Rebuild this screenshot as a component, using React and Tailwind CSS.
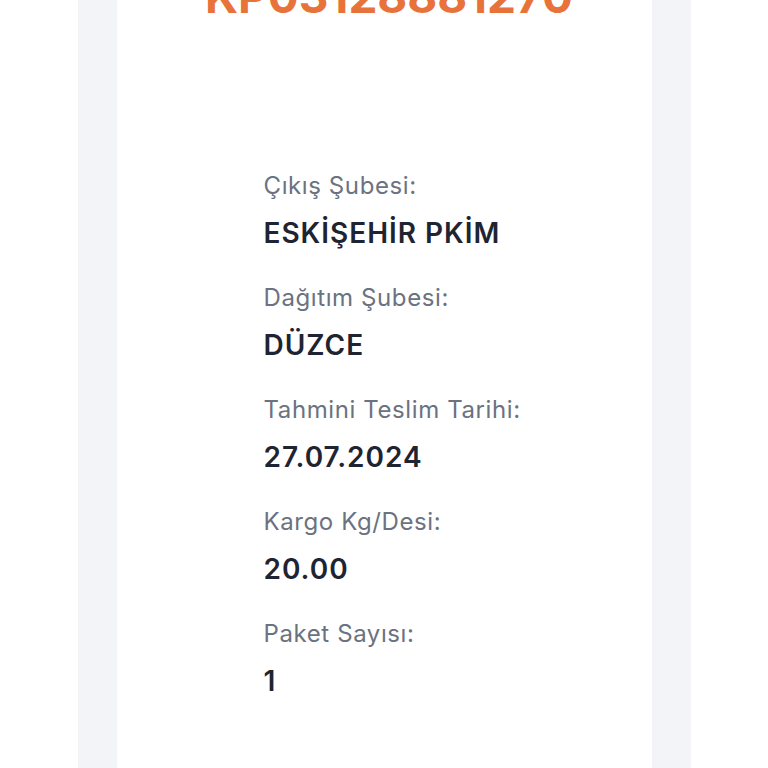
const rows = [
  { label: 'Çıkış Şubesi:', value: 'ESKİŞEHİR PKİM' },
  { label: 'Dağıtım Şubesi:', value: 'DÜZCE' },
  { label: 'Tahmini Teslim Tarihi:', value: '27.07.2024' },
  { label: 'Kargo Kg/Desi:', value: '20.00' },
  { label: 'Paket Sayısı:', value: '1' },
];

const App = () => {
  return (
    <div className="h-[768px] overflow-hidden bg-white flex justify-center" style={{ fontFamily: 'Inter, "Noto Sans", sans-serif' }}>
      <div className="w-[613px] bg-[#f3f4f7] px-[39px] flex flex-col">
        <div className="bg-white flex-1">
          <div className="-mt-[29px] pl-[10px] text-center text-[46px] font-bold leading-[50px] text-[#e8733a]">
            KP03128881270
          </div>
          <div className="pl-[147px] pt-[150px] flex flex-col gap-[33px]">
            {rows.map((row) => (
              <div key={row.label} className="flex flex-col gap-[15px]">
                <div className="text-[24px] leading-[30px] tracking-[0.025em] text-[#6b7280]">{row.label}</div>
                <div className="text-[28px] leading-[34px] tracking-[0.035em] font-semibold text-[#1f2433]">{row.value}</div>
              </div>
            ))}
          </div>
        </div>
      </div>
    </div>
  );
};

export default App;
